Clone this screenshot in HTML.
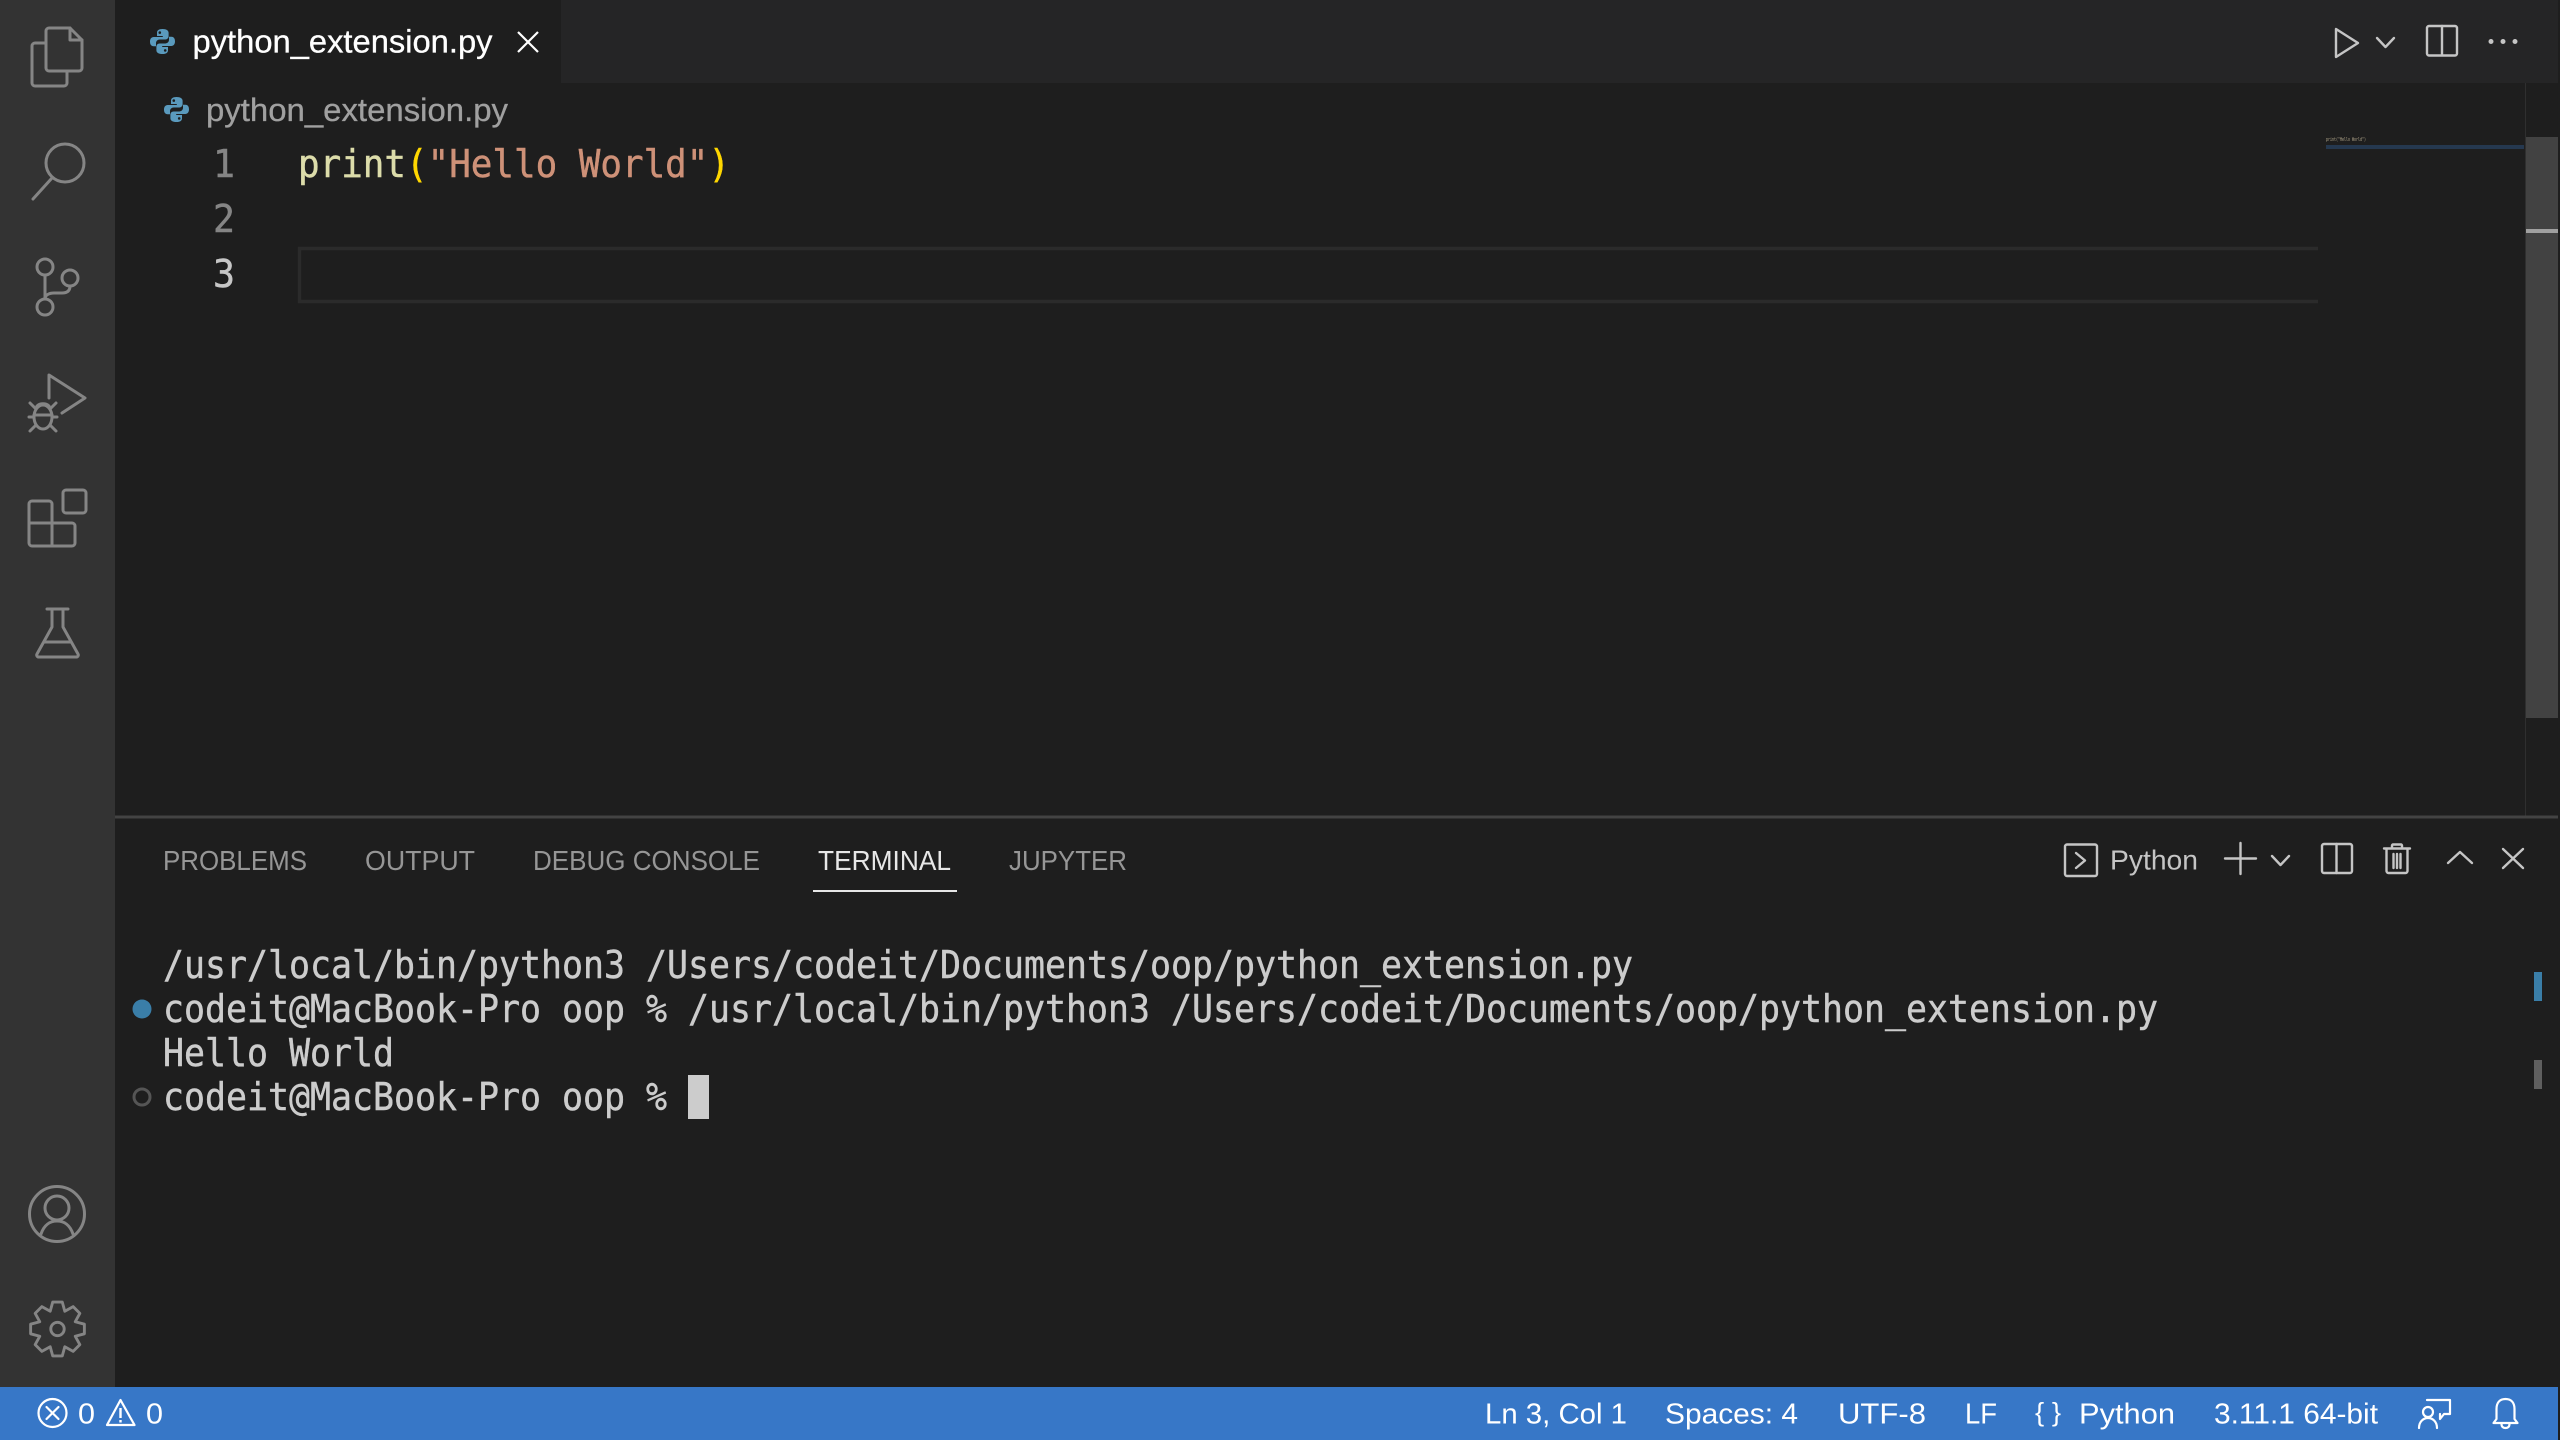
<!DOCTYPE html>
<html>
<head>
<meta charset="utf-8">
<style>
html,body{margin:0;padding:0;background:#1e1e1e;overflow:hidden}
svg{display:block}
.s{font-family:"Liberation Sans",sans-serif}
.m{font-family:"DejaVu Sans Mono","Liberation Mono",monospace;font-size:38px;stroke-width:.45px}
.ic{fill:none;stroke:#858585;stroke-width:3;stroke-linejoin:round;stroke-linecap:round}
.tb{fill:none;stroke:#c5c5c5;stroke-width:2.4;stroke-linejoin:round;stroke-linecap:round}
.st{fill:none;stroke:#fff;stroke-width:2.2;stroke-linejoin:round;stroke-linecap:round}
</style>
</head>
<body>
<svg width="2560" height="1440" viewBox="0 0 2560 1440" xmlns="http://www.w3.org/2000/svg">
<defs>
<g id="py">
<path fill="#5a9abd" fill-rule="evenodd" d="M12.6 0C8.4 0 7 1.6 7 3.8V7h5.8v1H3.8C1.4 8 0 9.8 0 12.6c0 2.9 1.3 4.6 3.6 4.6H6v-3c0-2.2 1.7-3.7 3.8-3.7h5.6c1.8 0 3.2-1.4 3.2-3.2V3.8C18.600 1.500 16.400 0 12.600 0zM9.800 2.300a1.300 1.300 0 1 1 0 2.600a1.300 1.300 0 1 1 0-2.600z"/>
<path fill="#5a9abd" fill-rule="evenodd" d="M12.400 25c4.200 0 5.600-1.600 5.600-3.800V18h-5.800v-1h9c2.400 0 3.800-1.800 3.800-4.600c0-2.900-1.300-4.600-3.600-4.600H19v3c0 2.200-1.700 3.700-3.800 3.700H9.600c-1.800 0-3.200 1.400-3.200 3.200v3.500C6.400 23.500 8.600 25 12.400 25zM15.200 22.700a1.300 1.300 0 1 1 0-2.600a1.300 1.300 0 1 1 0 2.600z"/>
</g>
</defs>

<rect width="2560" height="1440" fill="#1e1e1e"/>

<!-- activity bar -->
<rect x="0" y="0" width="115" height="1387" fill="#333333"/>
<!-- files -->
<path class="ic" d="M46 31a3 3 0 0 1 3-3h21l12 12v28a3 3 0 0 1-3 3H49a3 3 0 0 1-3-3z"/>
<path class="ic" d="M70 28v12h12"/>
<path class="ic" d="M46 43H35a3 3 0 0 0-3 3v37a3 3 0 0 0 3 3h29a3 3 0 0 0 3-3V71"/>
<!-- search -->
<circle class="ic" cx="65" cy="163" r="19"/>
<path class="ic" d="M52 178L33 199" stroke-width="3.400"/>
<!-- source control -->
<circle class="ic" cx="45" cy="267" r="8"/>
<circle class="ic" cx="45" cy="307" r="8"/>
<circle class="ic" cx="70" cy="278" r="8"/>
<path class="ic" d="M45 275v24M70 286c0 5-3 7-8 7H54c-5 0-9 2-9 6"/>
<!-- run debug -->
<path class="ic" d="M49 398V375L85 398L62 413" stroke-width="3.400"/>
<ellipse class="ic" cx="43" cy="417" rx="9" ry="12"/>
<path class="ic" d="M34 415h18M36 409l-6-6M50 409l6-6M34 417H29M52 417h5M36 425l-6 6M50 425l6 6M37 406c3-3 9-3 12 0"/>
<!-- extensions -->
<rect class="ic" x="63" y="490" width="23" height="23" rx="3"/>
<path class="ic" d="M52 523V504a3 3 0 0 0-3-3H32a3 3 0 0 0-3 3V543a3 3 0 0 0 3 3H72a3 3 0 0 0 3-3V526a3 3 0 0 0-3-3H29M52 523V546"/>
<!-- flask -->
<path class="ic" d="M47 609H68M52 609V627L37 654a2 2 0 0 0 2 3H76a2 2 0 0 0 2-3L63 627V609M45 642H70"/>
<!-- account -->
<circle class="ic" cx="57" cy="1214" r="27.500"/>
<circle class="ic" cx="57" cy="1208" r="12"/>
<path class="ic" d="M41 1234c3-9 9-13 16-13s13 4 16 13"/>
<!-- gear -->
<g transform="translate(57.500 1329) scale(.96)">
<path class="ic" stroke-width="3.800" d="M-5-28H5L7.600-18.500L16.300-23.300L23.300-16.300L18.500-7.600L28-5V5L18.500 7.600L23.300 16.300L16.300 23.300L7.600 18.500L5 28H-5L-7.600 18.500L-16.300 23.300L-23.300 16.300L-18.500 7.600L-28 5V-5L-18.500-7.600L-23.300-16.300L-16.300-23.300L-7.600-18.500Z"/>
<circle class="ic" stroke-width="3.800" r="7"/>
</g>

<!-- tab bar -->
<rect x="115" y="0" width="2445" height="83" fill="#252526"/>
<rect x="115" y="0" width="446" height="83" fill="#1e1e1e"/>
<use href="#py" x="150" y="29"/>
<text class="s" x="192.500" y="52.500" font-size="32" fill="#ffffff" stroke="#ffffff" stroke-width=".3" textLength="300" lengthAdjust="spacingAndGlyphs">python_extension.py</text>
<path d="M518 32L538 52M538 32L518 52" fill="none" stroke="#ffffff" stroke-width="2.200"/>

<!-- toolbar -->
<path class="tb" stroke-width="2.800" d="M2336 29V57L2358 43Z"/>
<path class="tb" stroke-width="1.700" d="M2377 38L2385.500 47L2394 38"/>
<rect class="tb" x="2427" y="26" width="30" height="29.500" rx="2"/>
<path class="tb" d="M2442 26V55"/>
<circle cx="2491" cy="41.500" r="2.500" fill="#c5c5c5"/>
<circle cx="2503" cy="41.500" r="2.500" fill="#c5c5c5"/>
<circle cx="2515" cy="41.500" r="2.500" fill="#c5c5c5"/>

<!-- breadcrumb -->
<use href="#py" x="164" y="97"/>
<text class="s" x="206" y="121" font-size="32" fill="#a0a0a0" stroke="#a0a0a0" stroke-width=".3" textLength="302" lengthAdjust="spacingAndGlyphs">python_extension.py</text>

<!-- line numbers -->
<text class="m" x="213" y="177" fill="#858585" stroke="#858585" textLength="22" lengthAdjust="spacingAndGlyphs">1</text>
<text class="m" x="213" y="232" fill="#858585" stroke="#858585" textLength="22" lengthAdjust="spacingAndGlyphs">2</text>
<text class="m" x="213" y="287" fill="#c6c6c6" stroke="#c6c6c6" textLength="22" lengthAdjust="spacingAndGlyphs">3</text>

<!-- code -->
<text class="m" x="298" y="177" fill="#dcdcaa" stroke="#dcdcaa" textLength="108" lengthAdjust="spacingAndGlyphs">print</text>
<text class="m" x="406" y="177" fill="#ffd700" stroke="#ffd700" textLength="21.600" lengthAdjust="spacingAndGlyphs">(</text>
<text class="m" x="427.600" y="177" fill="#ce9178" stroke="#ce9178" textLength="280.800" lengthAdjust="spacingAndGlyphs">"Hello World"</text>
<text class="m" x="708.400" y="177" fill="#ffd700" stroke="#ffd700" textLength="21.600" lengthAdjust="spacingAndGlyphs">)</text>

<!-- current line -->
<path d="M2318 248.500H299.500V301.500H2318" fill="none" stroke="#2b2b2b" stroke-width="3.400"/>

<!-- minimap -->
<text x="2326" y="141" font-family="DejaVu Sans Mono, monospace" font-size="5" fill="#b0a58a" textLength="40" lengthAdjust="spacingAndGlyphs">print("Hello World")</text>
<rect x="2326" y="145" width="198" height="4" fill="#25384f"/>

<!-- scrollbar -->
<rect x="2525" y="137" width="33" height="581" fill="#424242"/>
<rect x="2526" y="229" width="32" height="4" fill="#a0a0a0"/>
<rect x="2525" y="83" width="1" height="733" fill="#2f2f2f"/>

<!-- panel -->
<rect x="115" y="815.500" width="2443" height="3" fill="#434343"/>
<text class="s" x="163" y="870" font-size="28" fill="#969696" textLength="144" lengthAdjust="spacingAndGlyphs">PROBLEMS</text>
<text class="s" x="365" y="870" font-size="28" fill="#969696" textLength="110" lengthAdjust="spacingAndGlyphs">OUTPUT</text>
<text class="s" x="533" y="870" font-size="28" fill="#969696" textLength="227" lengthAdjust="spacingAndGlyphs">DEBUG CONSOLE</text>
<text class="s" x="818" y="870" font-size="28" fill="#e7e7e7" textLength="133" lengthAdjust="spacingAndGlyphs">TERMINAL</text>
<text class="s" x="1009" y="870" font-size="28" fill="#969696" textLength="118" lengthAdjust="spacingAndGlyphs">JUPYTER</text>
<rect x="813" y="890" width="144" height="2" fill="#e7e7e7"/>

<!-- panel toolbar -->
<rect class="tb" x="2065" y="844.500" width="32" height="31.500" rx="2"/>
<path class="tb" d="M2076 853L2085 860.500L2076 868"/>
<text class="s" x="2110" y="869.500" font-size="28" fill="#c5c5c5" textLength="88" lengthAdjust="spacingAndGlyphs">Python</text>
<path class="tb" stroke-width="2.800" stroke-linecap="butt" d="M2225 858.500H2256M2240.500 843V874"/>
<path class="tb" stroke-width="1.700" d="M2272 856L2280.500 865L2289 856"/>
<rect class="tb" x="2322" y="844" width="30" height="29" rx="2"/>
<path class="tb" d="M2336.500 844V873"/>
<path class="tb" d="M2384 848.500H2410M2392 848V845.500a1 1 0 0 1 1-1h8a1 1 0 0 1 1 1V848M2386.500 849V871a2 2 0 0 0 2 2h17a2 2 0 0 0 2-2V849M2393.500 854V868M2397 854V868M2400.500 854V868"/>
<path class="tb" stroke-width="2.200" d="M2448 863L2460 852L2472 863"/>
<path class="tb" stroke-width="2.400" d="M2503 849L2523 868M2523 849L2503 868"/>

<!-- terminal -->
<text class="m" x="163" y="978" fill="#cccccc" stroke="#cccccc" textLength="1470" lengthAdjust="spacingAndGlyphs">/usr/local/bin/python3 /Users/codeit/Documents/oop/python_extension.py</text>
<circle cx="142" cy="1009" r="9.500" fill="#3a7ea8"/>
<text class="m" x="163" y="1022" fill="#cccccc" stroke="#cccccc" textLength="1995" lengthAdjust="spacingAndGlyphs">codeit@MacBook-Pro oop % /usr/local/bin/python3 /Users/codeit/Documents/oop/python_extension.py</text>
<text class="m" x="163" y="1066" fill="#cccccc" stroke="#cccccc" textLength="231" lengthAdjust="spacingAndGlyphs">Hello World</text>
<circle cx="142" cy="1097" r="8" fill="none" stroke="#555555" stroke-width="3"/>
<text class="m" x="163" y="1110" fill="#cccccc" stroke="#cccccc" textLength="504" lengthAdjust="spacingAndGlyphs">codeit@MacBook-Pro oop %</text>
<rect x="688" y="1075" width="21" height="44" fill="#cccccc"/>
<rect x="2534" y="972" width="8" height="29" fill="#3a7ea8"/>
<rect x="2534" y="1060" width="8" height="29" fill="#5f5f5f"/>

<!-- status bar -->
<rect x="0" y="1387" width="2558" height="53" fill="#3777c7"/>
<circle class="st" cx="52.500" cy="1413" r="14"/>
<path class="st" d="M46.500 1407L58.500 1419M58.500 1407L46.500 1419"/>
<text class="s" x="78" y="1423.500" font-size="29" fill="#fff" textLength="17" lengthAdjust="spacingAndGlyphs">0</text>
<path class="st" d="M120.500 1400L134.500 1425H107Z"/>
<path d="M120.500 1408V1418M120.500 1420V1422.500" fill="none" stroke="#fff" stroke-width="2.400"/>
<text class="s" x="146" y="1423.500" font-size="29" fill="#fff" textLength="17" lengthAdjust="spacingAndGlyphs">0</text>

<text class="s" x="1485" y="1423.500" font-size="29" fill="#fff" textLength="142" lengthAdjust="spacingAndGlyphs">Ln 3, Col 1</text>
<text class="s" x="1665" y="1423.500" font-size="29" fill="#fff" textLength="133" lengthAdjust="spacingAndGlyphs">Spaces: 4</text>
<text class="s" x="1838" y="1423.500" font-size="29" fill="#fff" textLength="88" lengthAdjust="spacingAndGlyphs">UTF-8</text>
<text class="s" x="1965" y="1423.500" font-size="29" fill="#fff" textLength="32" lengthAdjust="spacingAndGlyphs">LF</text>
<text class="s" x="2035" y="1421" font-size="26" fill="#fff" textLength="26" lengthAdjust="spacingAndGlyphs">{ }</text>
<text class="s" x="2079" y="1423.500" font-size="29" fill="#fff" textLength="96" lengthAdjust="spacingAndGlyphs">Python</text>
<text class="s" x="2214" y="1423.500" font-size="29" fill="#fff" textLength="164" lengthAdjust="spacingAndGlyphs">3.11.1 64-bit</text>

<!-- feedback icon -->
<path class="st" d="M2427 1400H2450V1414H2444L2440 1419V1414"/>
<circle class="st" cx="2428" cy="1412" r="5"/>
<path class="st" d="M2419 1428c0-6 4-10 9-10s9 4 9 10"/>
<!-- bell -->
<path class="st" d="M2505.500 1399c-6 0-9 4-9 10v10l-3 4h24l-3-4v-10c0-6-3-10-9-10zM2501.500 1424c0 3 2 4 4 4s4-1 4-4"/>

<rect x="2558" y="0" width="2" height="1440" fill="#1e1e1e"/>
</svg>
</body>
</html>
